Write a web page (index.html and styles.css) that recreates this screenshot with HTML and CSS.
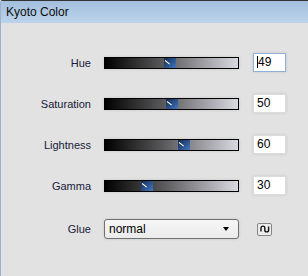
FILE: index.html
```html
<!DOCTYPE html>
<html lang="en">
<head>
    <meta charset="UTF-8">
    <title>Kyoto Color</title>
    <link rel="stylesheet" href="styles.css">
</head>
<body>

<div class="window">
    <div class="titlebar">Kyoto Color</div>
    <div class="panel">
        <div class="row">
            <span class="label">Hue</span>
            <div class="track"><span class="thumb" style="--v:49"></span></div>
            <span class="num focus"><i class="caret"></i>49</span>
        </div>
        <div class="row">
            <span class="label">Saturation</span>
            <div class="track"><span class="thumb" style="--v:50"></span></div>
            <span class="num">50</span>
        </div>
        <div class="row">
            <span class="label">Lightness</span>
            <div class="track"><span class="thumb" style="--v:60"></span></div>
            <span class="num">60</span>
        </div>
        <div class="row">
            <span class="label">Gamma</span>
            <div class="track"><span class="thumb" style="--v:30"></span></div>
            <span class="num">30</span>
        </div>
        <div class="row glue">
            <span class="label">Glue</span>
            <div class="select">normal<span class="arrow"></span></div>
            <span class="link">
                <svg width="13" height="12" viewBox="0 0 13 12">
                    <path d="M3 8.5 V5 a1.9 1.9 0 0 1 3.8 0 V7 a1.9 1.9 0 0 0 3.8 0 V3.5" fill="none" stroke="#111" stroke-width="1.4"/>
                </svg>
            </span>
        </div>
    </div>
</div>

</body>
</html>
```

FILE: styles.css
```css
body {
    margin: 0;
    background: #e2e2e2;
    font-family: "Liberation Sans", Arial, sans-serif;
}
.window {
    height: 276px;
    box-sizing: border-box;
    border-top: 1px solid #343434;
    border-left: 1px solid #9db2ca;
    border-top-left-radius: 3px;
    background: #e2e2e2;
}
.titlebar {
    height: 22px;
    line-height: 22px;
    padding-left: 5px;
    font-size: 12px;
    color: #0c0c0c;
    background: linear-gradient(#a3bfdd, #bcd3eb);
}
.panel {
    padding-top: 30px;
}
.row {
    display: flex;
    align-items: center;
    height: 19px;
    margin-bottom: 22px;
}
.row.glue {
    height: 20px;
    margin-top: 24px;
}
.row:nth-child(4) {
    margin-bottom: 0;
}
.label {
    width: 90px;
    text-align: right;
    font-size: 11px;
    color: #16203a;
}
.track {
    position: relative;
    box-sizing: border-box;
    width: 135px;
    height: 12px;
    margin-left: 13px;
    border: 1px solid #000;
    background: linear-gradient(to right, #000, #5c5c5e 45%, #d9d9e1);
    box-shadow: 0 0 3px rgba(0, 0, 0, 0.12);
}
.thumb {
    position: absolute;
    top: 0;
    bottom: 0;
    left: calc(var(--v) * 1.23px - 1px);
    width: 12px;
    background: linear-gradient(135deg, #16294a, #2c5490 55%, #4479c0);
}
.thumb::before {
    content: "";
    position: absolute;
    left: 1px;
    top: 2px;
    width: 6px;
    height: 1px;
    background: #fff;
    transform: rotate(38deg);
    transform-origin: left center;
}
.num {
    box-sizing: border-box;
    width: 33px;
    height: 19px;
    margin-left: 14px;
    padding-left: 3px;
    line-height: 17px;
    font-size: 12px;
    color: #000;
    background: #fff;
    border: 1px solid #dcdcdc;
    box-shadow: 0 0 3px rgba(0, 0, 0, 0.12);
}
.num.focus {
    border-color: #8fb0d6;
}
.caret {
    display: inline-block;
    width: 1px;
    height: 12px;
    background: #000;
    vertical-align: -2px;
}
.select {
    position: relative;
    box-sizing: border-box;
    width: 135px;
    height: 20px;
    margin-left: 13px;
    padding-left: 4px;
    line-height: 18px;
    font-size: 12px;
    color: #000;
    border: 1px solid #707070;
    border-radius: 3px;
    background: linear-gradient(#f6f6f6, #ebebeb);
    box-shadow: 0 0 3px rgba(0, 0, 0, 0.12);
}
.arrow {
    position: absolute;
    right: 9px;
    top: 7px;
    border-left: 3px solid transparent;
    border-right: 3px solid transparent;
    border-top: 4px solid #000;
}
.link {
    display: flex;
    align-items: center;
    justify-content: center;
    box-sizing: border-box;
    width: 15px;
    height: 13px;
    margin-left: 18px;
    border: 1px solid #858585;
    border-radius: 2px;
    background: #ededed;
}
```
